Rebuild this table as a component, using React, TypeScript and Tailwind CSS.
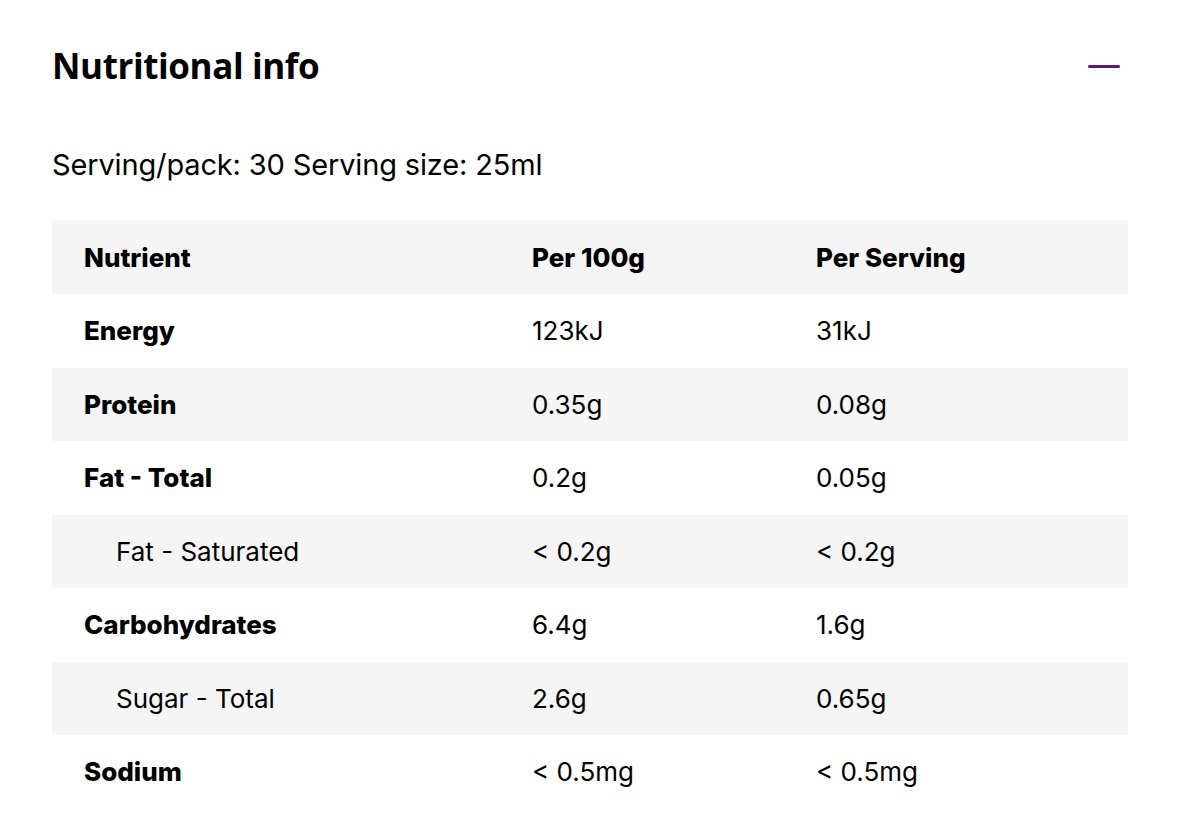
const rows = [
  { name: 'Energy', per100: '123kJ', perServing: '31kJ', sub: false },
  { name: 'Protein', per100: '0.35g', perServing: '0.08g', sub: false },
  { name: 'Fat - Total', per100: '0.2g', perServing: '0.05g', sub: false },
  { name: 'Fat - Saturated', per100: '< 0.2g', perServing: '< 0.2g', sub: true },
  { name: 'Carbohydrates', per100: '6.4g', perServing: '1.6g', sub: false },
  { name: 'Sugar - Total', per100: '2.6g', perServing: '0.65g', sub: true },
  { name: 'Sodium', per100: '< 0.5mg', perServing: '< 0.5mg', sub: false },
];

export default function App() {
  return (
    <div className="min-h-screen bg-white text-black px-[52px] pt-[42px]" style={{ fontFamily: 'Inter, "Noto Sans", sans-serif' }}>
      <div className="w-[1076px]">
        {/* Accordion header */}
        <div className="flex items-center justify-between h-[48px]">
          <h2 className="text-[35px] font-bold tracking-[-0.4px]" style={{ fontFamily: '"Open Sans", sans-serif' }}>
            Nutritional info
          </h2>
          <button className="w-[32px] h-[3px] mr-[8px] bg-[#5b1a6f] rounded-full" aria-label="Collapse" />
        </div>

        <p className="mt-[57px] text-[29px] leading-[36px] tracking-[-0.15px]">Serving/pack: 30 Serving size: 25ml</p>

        {/* Table */}
        <div className="mt-[37px] text-[26px]">
          <div className="grid grid-cols-[480px_284px_1fr] h-[74px] items-center bg-[#f5f5f5] font-extrabold">
            <div className="pl-[32px]">Nutrient</div>
            <div>Per 100g</div>
            <div>Per Serving</div>
          </div>
          {rows.map((r, i) => (
            <div
              key={r.name}
              className={`grid grid-cols-[480px_284px_1fr] h-[73.5px] items-center ${i % 2 === 1 ? 'bg-[#f5f5f5]' : 'bg-white'}`}
            >
              <div className={r.sub ? 'pl-[64px] font-normal' : 'pl-[32px] font-extrabold'}>{r.name}</div>
              <div>{r.per100}</div>
              <div>{r.perServing}</div>
            </div>
          ))}
        </div>
      </div>
    </div>
  );
}
